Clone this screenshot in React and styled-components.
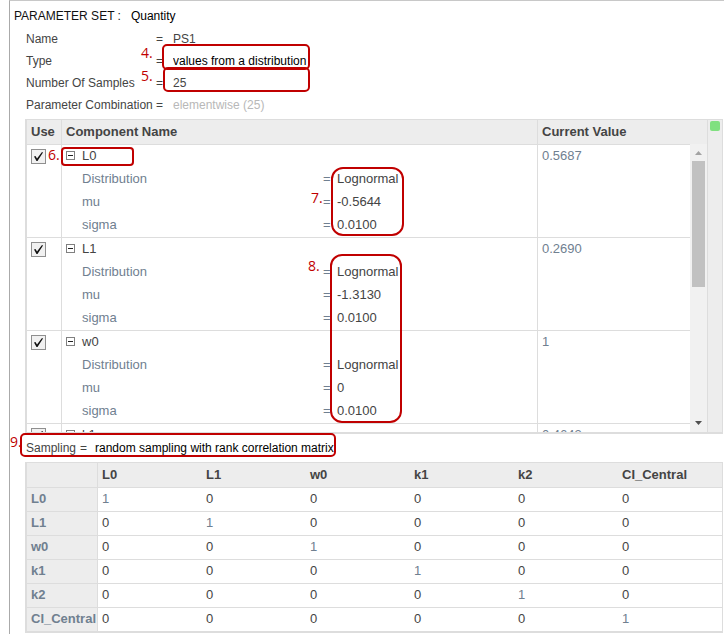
import * as React from "react";
import {useState} from "react";
import styled, {createGlobalStyle} from "styled-components";


const GlobalStyle = createGlobalStyle`
    * {
        box-sizing: border-box;
    }

    body {
        margin: 0;
        background-color: #ffffff;
        font-family: "Liberation Sans", Arial, sans-serif;
        font-size: 12px;
        color: #444444;
    }
`;

const Page = styled.main`
    position: relative;
    min-height: 100vh;
    margin-left: 9px;
    padding-right: 1px;
    border-top: 1px solid #c8c8c8;
    border-left: 1px solid #aaaaaa;
`;

const TitleBar = styled.div`
    display: flex;
    gap: 10px;
    padding: 4px 0 1px 4px;
    line-height: 22px;
    color: #111111;
`;

const Title = styled.label`
    white-space: pre;
`;

const Fields = styled.div`
    padding-left: 16px;
    margin-bottom: 3px;
`;

const Field = styled.div`
    display: grid;
    grid-template-columns: 130px 17px 1fr;
    height: 22px;
    line-height: 22px;
`;

const TextBox = styled.input`
    width: 130px;
    height: 22px;
    padding: 0;
    border: 0;
    background: none;
    font: inherit;
    color: ${(props) => (props.disabled ? "#b8b8b8" : "#444444")};
`;

const Picker = styled.select`
    appearance: none;
    justify-self: start;
    height: 22px;
    padding: 0;
    border: 0;
    background: none;
    font: inherit;
    color: #000000;
`;

const Panel = styled.section`
    display: grid;
    grid-template-columns: 1fr 17px 15px;
    height: 315px;
    margin-left: 15px;
    border: 1px solid #dddddd;
    border-left-width: 2px;
    border-bottom-width: 2px;
    overflow: hidden;
`;

const Clip = styled.div`
    overflow: hidden;
`;

const Table = styled.table`
    width: 100%;
    table-layout: fixed;
    border-collapse: separate;
    border-spacing: 0;
    font-size: 13px;
    text-align: left;
`;

const HeadCell = styled.th`
    width: ${(props) => props.$width || "auto"};
    height: 25px;
    padding: 0 0 1px 4px;
    border-bottom: 1px solid #dddddd;
    border-right: ${(props) => (props.$line ? "1px solid #dddddd" : "0")};
    background-color: #ededed;
    line-height: 23px;
    font-weight: bold;
`;

const Cell = styled.td`
    padding: 0 0 0 4px;
    border-bottom: 1px solid #dddddd;
    border-right: ${(props) => (props.$line ? "1px solid #dddddd" : "0")};
    vertical-align: top;
    line-height: 21px;
    color: #708090;
`;

const Line = styled.div`
    display: grid;
    grid-template-columns: 16px 241px 14px 1fr;
    height: 23px;
    padding-bottom: 2px;
`;

const Dark = styled.span`
    color: #444444;
`;

const Toggle = styled.button`
    display: block;
    width: 9px;
    height: 9px;
    margin-top: 6px;
    padding: 0;
    border: 0;
    background: none;

    svg {
        display: block;
    }
`;

const CheckWrap = styled.label`
    display: grid;
    width: 15px;
    height: 15px;
    margin-top: 4px;

    input, svg {
        grid-area: 1 / 1;
    }

    svg {
        pointer-events: none;
    }
`;

const CheckBox = styled.input`
    appearance: none;
    width: 15px;
    height: 15px;
    margin: 0;
    border: 1px solid #8f8f8f;
    background-color: #f1f1f1;
`;

const ScrollSide = styled.div`
    display: flex;
    flex-direction: column;
`;

const ScrollHead = styled.div`
    height: 24px;
    flex: none;
    background-color: #ededed;
`;

const Track = styled.div`
    flex: 1;
    display: flex;
    flex-direction: column;
    justify-content: space-between;
    background-color: #f1f1f1;
`;

const ArrowButton = styled.button`
    display: block;
    width: 17px;
    height: 17px;
    padding: 0;
    border: 0;
    background: none;

    svg {
        display: block;
    }
`;

const Thumb = styled.div`
    width: 13px;
    height: 126px;
    margin: 0 2px auto;
    background-color: #c1c1c1;
`;

const StatusStrip = styled.div`
    padding: 1px 0 0 2px;
    border-left: 1px solid #dddddd;
    background-color: #ededed;
`;

const StatusLight = styled.div`
    width: 10px;
    height: 10px;
    border-radius: 2px;
    background-color: #80e080;
`;

const Sampling = styled.div`
    display: grid;
    grid-template-columns: 54px 15px 1fr;
    align-items: center;
    height: 28px;
    padding-left: 16px;
`;

const MatrixBox = styled.section`
    margin-left: 15px;
    border: 1px solid #dddddd;
    border-left-width: 2px;
`;

const RowHead = styled.th`
    padding: 0 0 2px 4px;
    border-right: 1px solid #dddddd;
    border-bottom: 1px solid #dddddd;
    background-color: #ededed;
    line-height: 21px;
    color: #708090;
`;

const MatrixCell = styled.td`
    padding: 0 0 2px 4px;
    border-bottom: 1px solid #dddddd;
    line-height: 21px;
    color: ${(props) => (props.$diagonal ? "#708090" : "#444444")};
`;

// red annotations laid over the form
const Outline = styled.div`
    position: absolute;
    left: ${(props) => props.$x}px;
    top: ${(props) => props.$y}px;
    width: ${(props) => props.$w}px;
    height: ${(props) => props.$h}px;
    border: 2px solid #c00000;
    border-radius: ${(props) => props.$r}px;
    pointer-events: none;
`;

const Step = styled.span`
    position: absolute;
    left: ${(props) => props.$x}px;
    top: ${(props) => props.$y}px;
    font-family: "Open Sans", "Noto Sans", sans-serif;
    font-size: 14px;
    line-height: 18px;
    color: #c00000;
    pointer-events: none;
`;

const components = [
    {name: "L0", mu: "-0.5644", sigma: "0.0100", value: "0.5687", open: true},
    {name: "L1", mu: "-1.3130", sigma: "0.0100", value: "0.2690", open: true},
    {name: "w0", mu: "0", sigma: "0.0100", value: "1", open: true},
    {name: "k1", mu: "0", sigma: "0.0100", value: "0.4643", open: false},
];

const names = ["L0", "L1", "w0", "k1", "k2", "CI_Central"];

const callouts = [
    {step: 4, sx: 131, sy: 43, x: 152, y: 43, w: 148, h: 26, r: 5},
    {step: 5, sx: 131, sy: 66, x: 153, y: 66, w: 147, h: 25, r: 5},
    {step: 6, sx: 38, sy: 145, x: 51, y: 146, w: 73, h: 19, r: 4},
    {step: 7, sx: 301, sy: 188, x: 321, y: 166, w: 73, h: 69, r: 12},
    {step: 8, sx: 298, sy: 256, x: 320, y: 253, w: 72, h: 169, r: 12},
    {step: 9, sx: 0, sy: 432, x: 10, y: 432, w: 316, h: 24, r: 5},
];

const Check = ({label}) => {
    const [checked, setChecked] = useState(true);

    return (
        <CheckWrap>
            <CheckBox
                type="checkbox"
                aria-label={label}
                checked={checked}
                onChange={() => setChecked(!checked)}
            />
            {checked && (
                <svg width="15" height="15" viewBox="0 0 15 15">
                    <path d="M3 7.5 L4.5 7 L6 9.5 L11 3 L12 3.5 L6.5 12 L5.5 12 Z" fill="#111111"/>
                </svg>
            )}
        </CheckWrap>
    )
}

const Arrow = ({up}) => (
    <ArrowButton type="button" aria-label={up ? "Scroll up" : "Scroll down"}>
        <svg width="17" height="17" viewBox="0 0 17 17">
            {up
                ? <path d="M5 11 L8.5 7 L12 11 Z" fill="#a3a3a3"/>
                : <path d="M5 6 L12 6 L8.5 10 Z" fill="#505050"/>}
        </svg>
    </ArrowButton>
)

const ComponentRow = ({item}) => {
    const [open, setOpen] = useState(item.open);

    return (
        <tr>
            <Cell $line><Check label={"Use " + item.name}/></Cell>
            <Cell $line>
                <Line>
                    <Toggle
                        type="button"
                        aria-label={"Details of " + item.name}
                        aria-expanded={open}
                        onClick={() => setOpen(!open)}
                    >
                        <svg width="9" height="9" viewBox="0 0 9 9">
                            <rect x="0.5" y="0.5" width="8" height="8" fill="#ffffff" stroke="#808080"/>
                            <path d={open ? "M2 4.5 H7" : "M2 4.5 H7 M4.5 2 V7"} stroke="#222222"/>
                        </svg>
                    </Toggle>
                    <Dark>{item.name}</Dark>
                </Line>
                {open && (
                    <>
                        <Line><i/><span>Distribution</span><span>=</span><Dark>Lognormal</Dark></Line>
                        <Line><i/><span>mu</span><span>=</span><Dark>{item.mu}</Dark></Line>
                        <Line><i/><span>sigma</span><span>=</span><Dark>{item.sigma}</Dark></Line>
                    </>
                )}
            </Cell>
            <Cell>{item.value}</Cell>
        </tr>
    )
}

const Matrix = () => (
    <MatrixBox>
        <Table>
            <thead>
                <tr>
                    <HeadCell $line $width="71px"/>
                    {names.map((name) => <HeadCell key={name} scope="col">{name}</HeadCell>)}
                </tr>
            </thead>
            <tbody>
                {names.map((row) => (
                    <tr key={row}>
                        <RowHead scope="row">{row}</RowHead>
                        {names.map((col) => (
                            <MatrixCell key={col} $diagonal={row === col}>
                                {row === col ? 1 : 0}
                            </MatrixCell>
                        ))}
                    </tr>
                ))}
            </tbody>
        </Table>
    </MatrixBox>
)

export default function App() {
    return (
        <Page>
            <GlobalStyle/>
            <TitleBar>
                <Title htmlFor="kind">PARAMETER SET :</Title>
                <Picker id="kind"><option>Quantity</option></Picker>
            </TitleBar>
            <Fields>
                <Field>
                    <label htmlFor="name">Name</label><span>=</span>
                    <TextBox id="name" defaultValue="PS1"/>
                </Field>
                <Field>
                    <label htmlFor="type">Type</label><span>=</span>
                    <Picker id="type"><option>values from a distribution</option></Picker>
                </Field>
                <Field>
                    <label htmlFor="samples">Number Of Samples</label><span>=</span>
                    <TextBox id="samples" defaultValue="25"/>
                </Field>
                <Field>
                    <label htmlFor="combination">Parameter Combination</label><span>=</span>
                    <TextBox id="combination" defaultValue="elementwise (25)" disabled/>
                </Field>
            </Fields>

            <Panel>
                <Clip>
                    <Table>
                        <thead>
                            <tr>
                                <HeadCell $line $width="35px">Use</HeadCell>
                                <HeadCell $line>Component Name</HeadCell>
                                <HeadCell $width="152px">Current Value</HeadCell>
                            </tr>
                        </thead>
                        <tbody>
                            {components.map((item) => <ComponentRow key={item.name} item={item}/>)}
                        </tbody>
                    </Table>
                </Clip>
                <ScrollSide>
                    <ScrollHead/>
                    <Track>
                        <Arrow up/>
                        <Thumb/>
                        <Arrow/>
                    </Track>
                </ScrollSide>
                <StatusStrip><StatusLight/></StatusStrip>
            </Panel>

            <Sampling>
                <label htmlFor="sampling">Sampling</label><span>=</span>
                <Picker id="sampling"><option>random sampling with rank correlation matrix</option></Picker>
            </Sampling>
            <Matrix/>

            {callouts.map((c) => (
                <React.Fragment key={c.step}>
                    <Outline $x={c.x} $y={c.y} $w={c.w} $h={c.h} $r={c.r}/>
                    <Step $x={c.sx} $y={c.sy}>{c.step}.</Step>
                </React.Fragment>
            ))}
        </Page>
    )
}
